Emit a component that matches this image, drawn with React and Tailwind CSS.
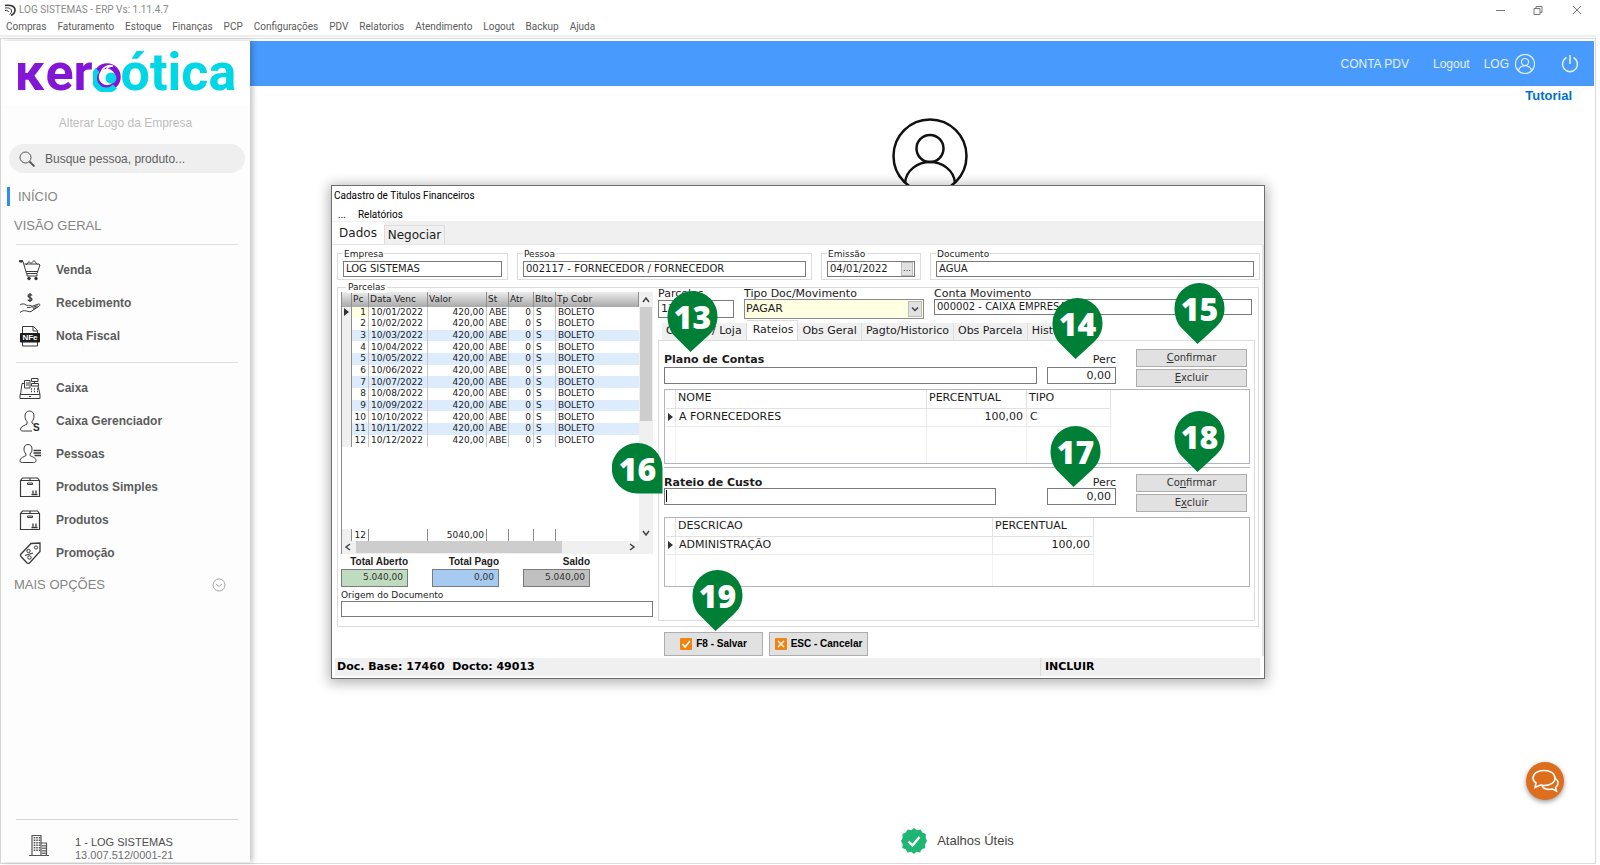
import { useState } from "react";
import clsx from "clsx";

const menu = ["Compras", "Faturamento", "Estoque", "Finanças", "PCP", "Configurações", "PDV", "Relatorios", "Atendimento", "Logout", "Backup", "Ajuda"];

const parcelas = ["01", "02", "03", "04", "05", "06", "07", "08", "09", "10", "11", "12"].map((mes, i) => ({
  pc: i + 1,
  data: `10/${mes}/2022`,
  valor: "420,00",
}));

const Icon = ({ children }) => (
  <svg viewBox="0 0 22 22" className="w-[22px] h-[22px] shrink-0" fill="none" stroke="#3a3a3a" strokeWidth="1">
    {children}
  </svg>
);

const CartIcon = () => (
  <Icon>
    <path d="M1 2.500h3l3.500 12h10.500l3-8.500-1-1H5.500M7 12.500h12M8 14.500v2.500h10v-2" />
    <path d="M7 6l3-3.500 2 2 3-3 3.500 4" />
    <path d="M0.500 1.500h3v1.500h-3z" fill="#3a3a3a" />
    <circle cx="10" cy="19.500" r="1.300" fill="#222" />
    <circle cx="17" cy="19.500" r="1.300" fill="#222" />
  </Icon>
);

const HandMoneyIcon = () => (
  <Icon>
    <path d="M13 3.500c-.5-1.200-4-1.500-4 .6 0 2 4 1.200 4 3.200s-3.700 1.800-4.200.3M11 1v9" strokeWidth="1.300" />
    <path d="M1 13c2-1.500 4.500-1.500 6 0 1.500.8 3 .2 5 .5 1.300.4.800 1.800-.5 1.900L8 15.500M12.500 14.500l7-2.500c1.500 0 2 1 1 1.800L12 19.500c-2 .8-4-.8-6.500-.8-1.500 0-3 .6-4.500 1.800M13.500 15.500l5-1.800M14 17l4.500-2" />
  </Icon>
);

const NfeIcon = () => (
  <Icon>
    <path d="M3.500 8V1.500h11l4 4V8M3.500 17v4h15v-4M14 1.500V6h4.500" />
    <path d="M1.500 8.500h19v8.500h-19z" fill="#1c1c1c" stroke="#1c1c1c" />
    <text x="11" y="15.300" textAnchor="middle" fontFamily="Liberation Sans, sans-serif" fontWeight="700" fontSize="8" fill="#fff" stroke="none">NFe</text>
  </Icon>
);

const RegisterIcon = () => (
  <Icon>
    <path d="M1 17.500h20v4H1zM1.500 17.500L3 6.500h3M19 9l2 8.500M10 19.500h2" />
    <path d="M5.500 3.500h5.500v7.500H5.500zM7 6h3M7 8h3M12.500 1.500h6.500v3h-6.500zM15.500 4.500v2M12.500 6.500h7v2.500h-7z" />
    <path d="M12 12h1M15 12h1M18 12h1M12 14.500h1M15 14.500h1M18 14.500h1" strokeWidth="1.500" />
  </Icon>
);

const UserMoneyIcon = () => (
  <Icon>
    <path d="M8 11.500C6.500 10 6 8 6 6c0-3 1.800-5 4.500-5S15 3 15 6c0 2-.5 4-2 5.500v1.500l2 1.500M8 11.500V14c-2 1.500-6 2-6.500 5 0 2 1.500 2 3 2H13" />
    <text x="14" y="21" fontFamily="Liberation Sans, sans-serif" fontWeight="700" fontSize="10" fill="#2a2a2a" stroke="none">S</text>
  </Icon>
);

const UserListIcon = () => (
  <Icon>
    <path d="M7 11C5.500 9.500 5 8 5 6c0-3 1.600-4.500 4-4.500S13 3 13 6c0 2-.5 3.500-2 5v1.500c2 1.500 6 2 6 5 0 1.500-1 2-2.500 2h-11C1 19.500 1 18.500 1 17.500c.2-3 4-3.500 6-5z" />
    <path d="M14.500 7.500H22M14.500 10H22M15.500 12.500H22" strokeWidth="1.300" />
  </Icon>
);

const BoxIcon = () => (
  <Icon>
    <path d="M1.500 4.500h19v16h-19zM1.500 4.500l2-2.500h15l2 2.500M11 2v2.500" strokeWidth="1.200" />
    <path d="M8.500 7h5v1.500h-5z" />
    <path d="M12.500 18.500h6M14 17.500v-3M17 17.500v-3" strokeWidth="1.300" />
  </Icon>
);

const TagIcon = () => (
  <Icon>
    <path d="M12 1.500l9-.5v8.500L10.500 21c-1 .8-1.800.5-2.500 0L2 14.500c-.8-1-.6-1.800 0-2.500z" strokeWidth="1.300" />
    <circle cx="17" cy="5.500" r="1.600" />
    <circle cx="9.500" cy="9" r="1.700" />
    <circle cx="10.500" cy="15.500" r="1.700" />
    <path d="M6 13.500l8-2.500" strokeWidth="1.300" />
  </Icon>
);

const grupos = [
  [
    { nome: "Venda", icone: CartIcon },
    { nome: "Recebimento", icone: HandMoneyIcon },
    { nome: "Nota Fiscal", icone: NfeIcon },
  ],
  [
    { nome: "Caixa", icone: RegisterIcon },
    { nome: "Caixa Gerenciador", icone: UserMoneyIcon },
    { nome: "Pessoas", icone: UserListIcon },
    { nome: "Produtos Simples", icone: BoxIcon },
    { nome: "Produtos", icone: BoxIcon },
    { nome: "Promoção", icone: TagIcon },
  ],
];

const Logo = () => (
  <div className="h-[64px] flex items-center justify-center bg-white font-['Roboto',sans-serif] font-bold text-[52px] leading-[52px]">
    <span className="text-[#8315d6]">ĸer</span>
    <svg viewBox="0 0 28 30" className="w-7 h-[30px] mt-2">
      <circle cx="14" cy="15" r="11" fill="none" stroke="#8315d6" strokeWidth="5.500" />
      <path d="M4.500 8A12 12 0 0 0 22 24.500" fill="none" stroke="#00d7e6" strokeWidth="5.500" />
      <path d="M8 11c1-5 6-8.500 12-7-4 0-6 2-7 4.500" fill="none" stroke="#fff" strokeWidth="1.600" />
      <circle cx="18" cy="16" r="5.500" fill="#00d7e6" />
    </svg>
    <span className="text-[#00d7e6]">ótica</span>
  </div>
);

const Sidebar = () => (
  <aside className="relative z-10 w-[249px] shrink-0 flex flex-col bg-[#fdfdfd] shadow-[3px_0_5px_rgba(0,0,0,0.22)] font-['Liberation_Sans',sans-serif]">
    <Logo />
    <button className="h-9 text-xs text-[#bdbdbd]">Alterar Logo da Empresa</button>
    <label className="mt-[3px] ml-2 mr-[5px] h-[29px] flex items-center rounded-full bg-[#efefef] px-[10px] gap-[10px]">
      <svg viewBox="0 0 16 16" className="w-4 h-4 shrink-0" fill="none" stroke="#555">
        <circle cx="6.500" cy="6.500" r="5.500" />
        <path d="M10.500 10.500l5 5" strokeWidth="1.800" />
      </svg>
      <input className="w-full text-xs bg-transparent outline-none placeholder:text-[#5f5f5f]" placeholder="Busque pessoa, produto..." aria-label="Busca" />
    </label>
    <a href="#inicio" className="mt-[14px] ml-[6px] h-[19px] pl-2 flex items-center border-l-3 border-[#2f8cf5] text-[13px] text-[#858585]">INÍCIO</a>
    <h2 className="mt-[10px] ml-[13px] h-5 leading-5 text-[13px] text-[#858585]">VISÃO GERAL</h2>
    {grupos.map((grupo, i) => (
      <ul key={i} className="mt-2 ml-[15px] mr-3 pt-2 pb-[2px] border-t border-[#dedede]">
        {grupo.map(({ nome, icone: Icone }) => (
          <li key={nome}>
            <a href="#menu" className="h-[33px] pl-[3px] flex items-center gap-[15px] text-xs font-bold text-[#5c5c5c]">
              <Icone />
              {nome}
            </a>
          </li>
        ))}
      </ul>
    ))}
    <button className="h-7 pl-[13px] pr-6 flex items-center justify-between text-[13px] text-[#858585]">
      MAIS OPÇÕES
      <svg viewBox="0 0 14 14" className="w-[14px] h-[14px]" fill="none" stroke="#a5a5a5">
        <circle cx="7" cy="7" r="6" />
        <path d="M4 6l3 2.500L10 6" />
      </svg>
    </button>
    <div className="mt-auto ml-[15px] mr-3 pt-4 pl-[13px] flex gap-[26px] border-t border-[#d6d6d6]">
      <svg viewBox="0 0 20 22" className="w-5 h-[22px] -mt-[2px]" fill="none" stroke="#555">
        <path d="M3 21V1.500h9V21M12 9h5.500v12M0 21.500h20" strokeWidth="1.200" />
        <path d="M5.500 3v15M8 3v15M10.500 3v15M14 11v9M16 11v9" strokeDasharray="1.500 1" strokeWidth="1.600" />
      </svg>
      <p className="text-[11px] leading-[13px] text-[#6e6e6e]">
        <span className="block text-[#4d4d4d]">1 - LOG SISTEMAS</span>
        13.007.512/0001-21
      </p>
    </div>
  </aside>
);

const Avatar = ({ className, stroke, width }) => (
  <svg viewBox="0 0 76 76" className={className} fill="none" stroke={stroke} strokeWidth={width}>
    <circle cx="38" cy="38" r="36.500" />
    <circle cx="38" cy="30.500" r="13.500" />
    <path d="M13 65C14 52 26 44 38 44s24 8 25 21" />
  </svg>
);

const inputClass = "block w-full px-[2px] border border-[#7a7a7a] bg-white text-[10px] text-[#1c1c1c] outline-none";

const Grupo = ({ id, label, value, className, children }) => (
  <fieldset className={clsx("border border-[#dcdcdc] px-[5px] pb-[2px] min-w-0", className)}>
    <legend className="px-px text-[9px] leading-[12px]">
      <label htmlFor={id}>{label}</label>
    </legend>
    <div className="relative pt-px">
      <input id={id} defaultValue={value} className={clsx(inputClass, "h-4")} />
      {children}
    </div>
  </fieldset>
);

const Seta = ({ d, className }) => (
  <svg viewBox="0 0 8 8" className={clsx("w-2 h-2 shrink-0", className)} fill="none" stroke="#444" strokeWidth="1.500">
    <path d={d} />
  </svg>
);

const Marcador = () => (
  <svg viewBox="0 0 5 8" className="w-[5px] h-2 mx-auto" fill="#333">
    <path d="M0 0l5 4-5 4z" />
  </svg>
);

const cell = "border-r border-[#c8c8c8] px-[2px] overflow-hidden whitespace-nowrap";

const GradeParcelas = () => (
  <div className="h-[262px] flex flex-col border-l border-[#8c8c8c] text-[9px] leading-[11px] text-[#222]">
    <div className="flex-1 flex min-h-0">
      <div className="flex-1 flex flex-col justify-between">
        <table className="w-full h-[155px] table-fixed border-separate border-spacing-0">
          <colgroup>
            <col className="w-[10px]" />
            <col className="w-[17px]" />
            <col className="w-[59px]" />
            <col className="w-[59px]" />
            <col className="w-[22px]" />
            <col className="w-[25px]" />
            <col className="w-[22px]" />
            <col />
          </colgroup>
          <thead>
            <tr className="h-[15px] bg-linear-to-b from-[#ececec] to-[#a9a9a9] text-left">
              {["", "Pc", "Data Venc", "Valor", "St", "Atr", "Blto", "Tp Cobr"].map((t) => (
                <th key={t} className="p-0 pl-px font-normal border-r border-[#8f8f8f] whitespace-nowrap">{t}</th>
              ))}
            </tr>
          </thead>
          <tbody>
            {parcelas.map(({ pc, data, valor }) => (
              <tr key={pc} className={pc > 1 && pc % 2 ? "bg-[#dcecfd]" : "bg-white"}>
                <td className="bg-[#f0f0f0] border-r border-[#8c8c8c] p-0">{pc === 1 && <Marcador />}</td>
                <td className={clsx(cell, "text-right", pc === 1 && "bg-[#ffffe1]")}>{pc}</td>
                <td className={cell}>{data}</td>
                <td className={clsx(cell, "text-right")}>{valor}</td>
                <td className={cell}>ABE</td>
                <td className={clsx(cell, "text-right")}>0</td>
                <td className={cell}>S</td>
                <td className="px-[2px]">BOLETO</td>
              </tr>
            ))}
          </tbody>
        </table>
        <div className="h-3 flex leading-[13px] *:border-r *:border-[#8c8c8c] *:shrink-0 *:text-right *:pr-[2px]">
          <span className="w-[10px] bg-[#f0f0f0]" />
          <span className="w-[17px]">12</span>
          <span className="w-[59px]" />
          <span className="w-[59px]">5040,00</span>
          <span className="w-[22px]" />
          <span className="w-[25px]" />
          <span className="w-[22px]" />
        </div>
      </div>
      <div className="w-[14px] bg-[#f0f0f0] flex flex-col items-center pt-1 pb-1">
        <Seta d="M1 6l3-4 3 4" />
        <span className="mt-[3px] w-3 h-[114px] bg-[#cdcdcd]" />
        <Seta d="M1 2l3 4 3-4" className="mt-auto" />
      </div>
    </div>
    <div className="h-[13px] bg-[#f0f0f0] flex items-center pl-[2px] pr-[17px]">
      <Seta d="M6 1L2 4l4 3" />
      <span className="ml-1 w-[206px] h-3 bg-[#cdcdcd]" />
      <Seta d="M2 1l4 3-4 3" className="ml-auto" />
    </div>
  </div>
);

const Total = ({ id, label, value, className }) => (
  <div className="w-[67px] flex flex-col items-end">
    <label htmlFor={id} className="font-['Liberation_Sans',sans-serif] font-bold text-[10px] leading-[14px] whitespace-nowrap">{label}</label>
    <input id={id} readOnly value={value} className={clsx("w-full h-[18px] pr-1 pb-[2px] text-right text-[9px] text-[#333] border border-[#7a7a7a] outline-none", className)} />
  </div>
);

const Botao = ({ children }) => (
  <button className="h-[18px] w-[111px] bg-[#e1e1e1] border border-[#adadad] text-[10px] leading-[14px] text-[#333]">{children}</button>
);

const Rateio = ({ id, label, foco, confirmar, excluir, base, campo, linha }) => (
  <div className="flex items-end pr-[3px]">
    <div className={clsx("flex-1", base)}>
      <label htmlFor={id} className={clsx("block font-bold", linha)}>{label}</label>
      <div className={clsx("relative", campo)}>
        <input id={id} className={clsx(inputClass, "h-[17px]")} />
        {foco && <span className="absolute left-[2px] top-[2px] w-px h-3 bg-black" />}
      </div>
    </div>
    <div className={clsx("ml-[10px] w-[69px]", base)}>
      <label htmlFor={`${id}-perc`} className={clsx("block text-right", linha)}>Perc</label>
      <input id={`${id}-perc`} defaultValue="0,00" className="block w-full h-[17px] pr-1 text-right border border-[#7a7a7a] text-[11px] outline-none" />
    </div>
    <div className="ml-[20px] flex flex-col gap-[2px]">
      <Botao>{confirmar}</Botao>
      <Botao>{excluir}</Botao>
    </div>
  </div>
);

const Grade = ({ colunas, valores, className }) => (
  <div className={clsx("border border-[#b4b4bc] pl-px", className)}>
    <table className="h-full table-fixed border-separate border-spacing-0 text-left">
      <thead>
        <tr className="h-[19px] *:border-b *:border-r *:border-[#e2e2e2]">
          <th className="w-[10px]" />
          {colunas.map(({ nome, largura }) => (
            <th key={nome} className={clsx("font-normal px-[2px] py-0", largura)}>{nome}</th>
          ))}
        </tr>
      </thead>
      <tbody>
        <tr className="h-[18px] *:border-b *:border-r *:border-[#e9e9e9]">
          <td><Marcador /></td>
          {valores.map((v) => (
            <td key={v} className={clsx("px-[3px] py-0", v === "100,00" && "text-right")}>{v}</td>
          ))}
        </tr>
        <tr className="*:border-r *:border-[#f2f2f2]">
          <td />
          {valores.map((v) => (
            <td key={v} />
          ))}
        </tr>
      </tbody>
    </table>
  </div>
);

const AbaRateios = () => (
  <div className="h-[281px] border border-[#dcdcdc] pl-[5px] pr-1 pt-2">
    <Rateio id="plano" label="Plano de Contas" base="pb-[3px]" linha="leading-[14px]" confirmar={<><u>C</u>onfirmar</>} excluir={<><u>E</u>xcluir</>} />
    <Grade
      className="mt-[2px] h-[75px]"
      colunas={[
        { nome: "NOME", largura: "w-[251px]" },
        { nome: "PERCENTUAL", largura: "w-[100px]" },
        { nome: "TIPO", largura: "w-[84px]" },
      ]}
      valores={["A FORNECEDORES", "100,00", "C"]}
    />
    <hr className="mt-[3px] mb-[6px] border-[#b8b8b8]" />
    <Rateio id="custo" label="Rateio de Custo" foco base="pb-[7px]" linha="leading-[10px]" campo="mr-[41px]" confirmar={<>Co<u>n</u>firmar</>} excluir={<>E<u>x</u>cluir</>} />
    <Grade
      className="mt-[5px] h-[70px]"
      colunas={[
        { nome: "DESCRICAO", largura: "w-[317px]" },
        { nome: "PERCENTUAL", largura: "w-[101px]" },
      ]}
      valores={["ADMINISTRAÇÃO", "100,00"]}
    />
  </div>
);

const abas = ["Cartões / Loja", "Rateios", "Obs Geral", "Pagto/Historico", "Obs Parcela", "Historico"];

const Pino = ({ n, className, lado }) => (
  <div className={clsx("absolute w-[51px] h-[61px]", className)}>
    <svg viewBox="0 0 51 61" className="w-full h-full" fill="#008036">
      {lado ? <path d="M25 0a25 25 0 0 1 25.500 25V50.500H25A25 25 0 0 1 25 0z" /> : <path d="M25.500 0a25 25 0 0 1 25 25.500c0 8-3.500 14-9 19L23.500 61 7 44.500C3 40 .5 33 .5 25.500A25 25 0 0 1 25.500 0z" />}
    </svg>
    <span className="absolute inset-x-0 top-0 h-[52px] leading-[52px] text-center text-white font-['Open_Sans',sans-serif] font-extrabold text-[32px]">{n}</span>
  </div>
);

const Dialogo = () => {
  const [aba, setAba] = useState("Rateios");

  return (
    <section className="relative w-[934px] bg-white border border-[#6e6e6e] shadow-[0_2px_12px_2px_rgba(0,0,0,0.3)] font-['DejaVu_Sans',sans-serif] text-[11px] text-[#1c1c1c]">
      <h1 className="h-5 pl-[2px] font-['Roboto',sans-serif] text-[10px] leading-5 text-black">Cadastro de Titulos Financeiros</h1>
      <nav className="h-[15px] pl-[6px] flex gap-3 font-['Roboto',sans-serif] text-[10px] leading-[18px] text-black">
        <button>...</button>
        <button>Relatórios</button>
      </nav>
      <div className="h-[23px] flex items-end bg-[#f0f0f0] text-xs">
        <button className="w-[52px] h-[22px] bg-white">Dados</button>
        <button className="w-[61px] h-[19px] border border-b-0 border-[#dcdcdc]">Negociar</button>
      </div>

      <div className="border-t border-r-2 border-[#e6e6e6] pt-[3px] pl-[5px]">
        <div className="flex gap-[9px] pr-[2px]">
          <Grupo id="empresa" label="Empresa" value="LOG SISTEMAS" className="w-[171px]" />
          <Grupo id="pessoa" label="Pessoa" value="002117 - FORNECEDOR / FORNECEDOR" className="w-[295px]" />
          <Grupo id="emissao" label="Emissão" value="04/01/2022" className="w-[100px]">
            <button className="absolute right-[2px] top-[2px] w-3 h-[14px] bg-[#e1e1e1] border border-[#bbb] text-[8px] leading-[6px]">…</button>
          </Grupo>
          <Grupo id="documento" label="Documento" value="AGUA" className="flex-1" />
        </div>

        <div className="relative mt-[7px] mr-[3px] h-[340px] pl-[3px] pr-[3px] border border-[#dcdcdc] flex gap-[5px]">
          <span className="absolute left-2 -top-[7px] px-[2px] bg-white text-[9px] leading-[12px]">Parcelas</span>
          <div className="w-[312px] pt-1">
            <GradeParcelas />
            <div className="mt-px flex gap-6">
              <Total id="aberto" label="Total Aberto" value="5.040,00" className="bg-[#c0dcc0]" />
              <Total id="pago" label="Total Pago" value="0,00" className="bg-[#a6caf0]" />
              <Total id="saldo" label="Saldo" value="5.040,00" className="bg-[#c0c0c0]" />
            </div>
            <label htmlFor="origem" className="block mt-[2px] text-[9px] leading-[12px]">Origem do Documento</label>
            <input id="origem" className={clsx(inputClass, "h-4")} />
          </div>

          <div className="flex-1 min-w-0">
            <div className="h-8 flex gap-[10px] pr-[3px] leading-[11px]">
              <div className="w-[76px]">
                <label htmlFor="parcelas" className="block h-3">Parcelas</label>
                <input id="parcelas" defaultValue="12" className="block w-full h-[18px] px-[2px] border border-[#7a7a7a] outline-none" />
              </div>
              <div className="w-[180px] relative">
                <label htmlFor="tipo" className="block h-[11px]">Tipo Doc/Movimento</label>
                <select id="tipo" className="block appearance-none w-full h-5 px-px bg-[#ffffe1] border border-[#8a8a8a] outline-none">
                  <option>PAGAR</option>
                </select>
                <span className="pointer-events-none absolute right-[2px] bottom-[3px] w-[14px] h-4 bg-[#e1e1e1] border border-[#bbb] flex items-center justify-center">
                  <Seta d="M1 2.500l3 3 3-3" />
                </span>
              </div>
              <div className="flex-1">
                <label htmlFor="conta" className="block h-[11px]">Conta Movimento</label>
                <input id="conta" defaultValue="000002 - CAIXA EMPRESA" className={clsx(inputClass, "h-4")} />
              </div>
            </div>
            <div className="h-5 pl-1 flex items-end">
              {abas.map((a) => (
                <button
                  key={a}
                  onClick={() => setAba(a)}
                  className={clsx("px-1 border-r border-[#dcdcdc] whitespace-nowrap", aba === a ? "h-5 pl-[6px] bg-white border-t" : "h-[17px] bg-[#f0f0f0]")}
                >
                  {a}
                </button>
              ))}
            </div>
            <AbaRateios />
          </div>
        </div>

        <div className="mt-[5px] mb-[2px] ml-[327px] flex gap-[6px] *:h-6 *:w-[99px] *:flex *:items-center *:justify-center *:gap-1 *:bg-[#e1e1e1] *:border *:border-[#adadad] font-['Liberation_Sans',sans-serif] font-bold text-[10px] text-black">
          <button>
            <svg viewBox="0 0 12 12" className="w-3 h-3">
              <rect width="12" height="12" rx="1" fill="#ee8413" />
              <path d="M2.500 6l2.500 3 5-6" fill="none" stroke="#fff" strokeWidth="1.500" />
            </svg>
            F8 - Salvar
          </button>
          <button>
            <svg viewBox="0 0 12 12" className="w-3 h-3">
              <rect width="12" height="12" rx="1" fill="#ee8413" />
              <path d="M3 3l6 6M9 3l-6 6" fill="none" stroke="#fff" strokeWidth="1.300" />
            </svg>
            ESC - Cancelar
          </button>
        </div>
      </div>
      <footer className="h-[18px] ml-[3px] mr-1 mb-[2px] flex bg-[#f0f0f0] font-bold leading-[18px] text-black">
        <span className="w-[706px] pl-[2px] border-r border-[#dcdcdc] whitespace-pre">Doc. Base: 17460  Docto: 49013</span>
        <span className="pl-1">INCLUIR</span>
      </footer>

      <Pino n="13" className="left-[335px] top-[105px]" />
      <Pino n="14" className="left-[720px] top-[112px]" />
      <Pino n="15" className="left-[842px] top-[97px]" />
      <Pino n="16" className="left-[280px] top-[257px]" lado />
      <Pino n="17" className="left-[718px] top-[240px]" />
      <Pino n="18" className="left-[842px] top-[225px]" />
      <Pino n="19" className="left-[360px] top-[384px]" />
    </section>
  );
};

export default function App() {
  return (
    <div className="relative min-h-screen flex flex-col bg-white pr-1 pb-px font-['Liberation_Sans',sans-serif]">
      <div className="h-[19px] pl-1 pr-[14px] flex items-center font-['Roboto',sans-serif] text-[10px] text-[#8a8a8a]">
        <svg viewBox="0 0 12 12" className="w-3 h-3 mr-[3px]" fill="none" stroke="#333">
          <path d="M1 1.500c6-1 10 1 10 4.500s-3 5-4 5.500" strokeWidth="1.600" />
          <path d="M1 4c4-.5 6.500.5 6.500 3S6 10 5.500 10.500M1 6.500c2-.3 3.500.3 3.500 1.500" />
        </svg>
        LOG SISTEMAS - ERP Vs: 1.11.4.7
        <svg viewBox="0 0 86 10" className="w-[86px] h-[10px] ml-auto" fill="none" stroke="#777">
          <path d="M0 5.500h9M38 3.500h6v6h-6zM40 3.500v-2h6v6h-2M77 1l8 8M85 1l-8 8" />
        </svg>
      </div>
      <nav className="h-4 pl-[6px] flex items-center gap-[11px] font-['Roboto',sans-serif] text-[10px] leading-4 text-[#5a5a5a]">
        {menu.map((item) => (
          <button key={item}>{item}</button>
        ))}
      </nav>
      <div className="h-[2px] mb-px bg-[#efefef]" />

      <div className="flex-1 flex border border-[#dadada] pt-[2px] pr-px pb-px">
        <Sidebar />
        <main className="relative flex-1 flex flex-col">
          <header className="h-[45px] pr-[15px] flex items-center justify-end bg-[#489bfc] text-xs text-[#e4f0ff]">
            <a href="#pdv">CONTA PDV</a>
            <a href="#logout" className="ml-6">Logout</a>
            <a href="#log" className="ml-[14px] flex items-center gap-[6px]">
              LOG
              <Avatar className="w-5 h-5" stroke="#e4f0ff" width="4.500" />
            </a>
            <button className="ml-[26px]" aria-label="Sair">
              <svg viewBox="0 0 18 18" className="w-[18px] h-[18px]" fill="none" stroke="#eaf3ff" strokeWidth="1.500">
                <path d="M5.500 2.500a7.500 7.500 0 1 0 7 0M9 0v9" />
              </svg>
            </button>
          </header>
          <a href="#tutorial" className="self-end mr-[22px] h-5 leading-5 text-[13px] font-bold text-[#0071ce]">Tutorial</a>
          <div className="pl-[15px] mt-3 flex justify-center">
            <Avatar className="w-[76px] h-[76px]" stroke="#111" width="2.500" />
          </div>
          <div className="mt-auto mb-2 pl-[71px] flex items-center justify-center gap-[10px] text-[13px] text-[#444]">
            <svg viewBox="0 0 26 26" className="w-[26px] h-[26px]">
              <path d="M13 0l3 2.200 3.600-.8 1.800 3.200 3.500 1.300-.3 3.700L26 13l-1.900 3.200.2 3.800-3.400 1.300-2 3.200-3.500-.7L13 26l-2.800-2.200-3.600.7-1.900-3.200L1.300 20l.4-3.700L0 13l1.700-3.300-.3-3.800 3.400-1.300 1.900-3.200 3.500.8z" fill="#1fb573" />
              <path d="M7.500 13.500l4 4 7-8.500" fill="none" stroke="#fff" strokeWidth="2.400" />
            </svg>
            Atalhos Úteis
          </div>
          <button className="absolute right-[30px] bottom-[62px] w-[38px] h-[38px] rounded-full bg-[#dc6e1e] shadow-[0_2px_5px_rgba(0,0,0,0.4)] flex items-center justify-center" aria-label="Chat">
            <svg viewBox="0 0 28 24" className="w-7 h-6" fill="#dc6e1e" stroke="#fff" strokeWidth="1.500">
              <path d="M20 8c4 .5 7 3 7 6 0 2-1 3.500-2.500 4.500l1 3.500-4-2c-5 1-9-.5-10.500-3" />
              <path d="M13 1.500c6.500 0 11 3 11 7.500s-4.500 7.500-11 7.500c-1.200 0-2.500-.2-3.500-.5L4 18.500l1-4.500C3 12.700 2 11 2 9c0-4.500 4.500-7.500 11-7.500z" />
            </svg>
          </button>
        </main>
      </div>

      <div className="absolute inset-0 z-20 pr-1 pb-[2px] flex items-center justify-center pointer-events-none *:pointer-events-auto">
        <Dialogo />
      </div>
    </div>
  );
}
